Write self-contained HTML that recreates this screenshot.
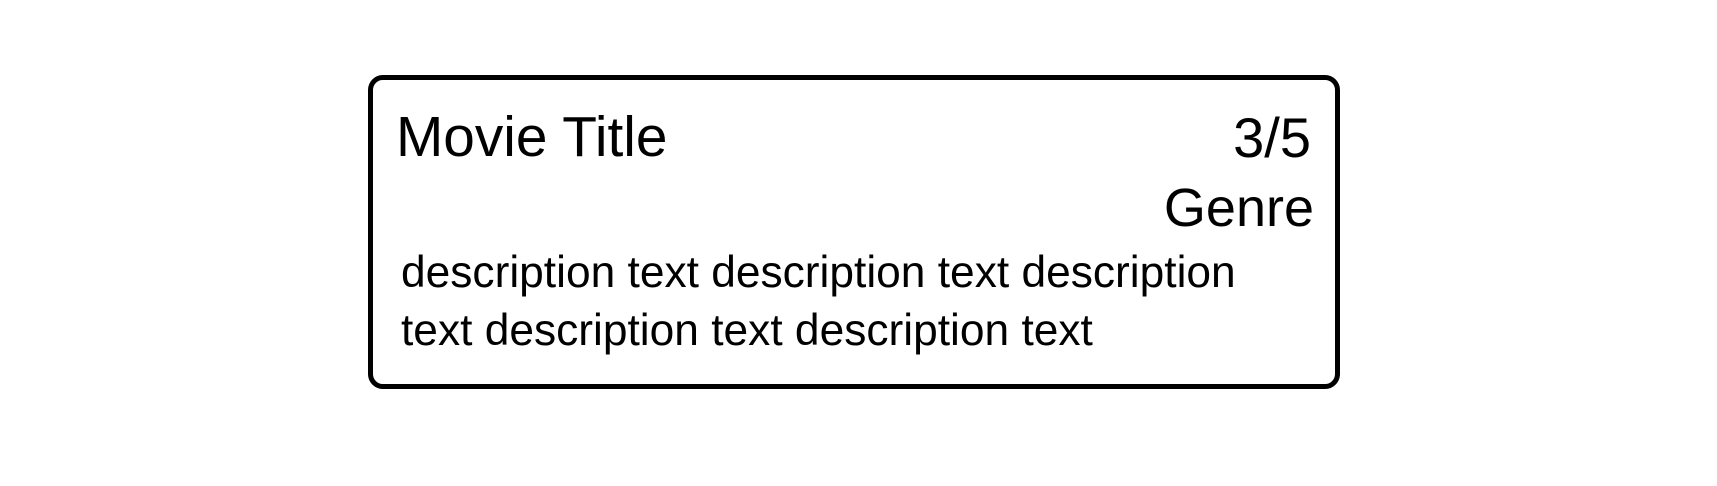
<!DOCTYPE html>
<html><head><meta charset="utf-8"><style>
html,body{margin:0;padding:0;background:#fff;width:1717px;height:486px;overflow:hidden}
.box{position:absolute;left:368px;top:75px;width:962px;height:304px;border:5px solid #000;border-radius:15px}
.t{position:absolute;font-family:"Liberation Sans",sans-serif;color:#000;line-height:1;white-space:nowrap}
</style></head><body>
<div class="box"></div>
<div class="t" style="left:396px;top:110px;font-size:56.8px">Movie Title</div>
<div class="t" style="right:406px;top:110px;font-size:56px">3/5</div>
<div class="t" style="right:403px;top:181px;font-size:54px">Genre</div>
<div class="t" style="left:401px;top:251px;font-size:44.3px">description text description text description</div>
<div class="t" style="left:401px;top:309px;font-size:44.3px">text description text description text</div>
</body></html>
